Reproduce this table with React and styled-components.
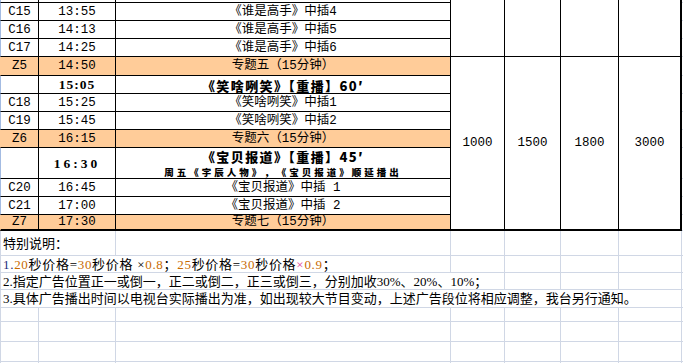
import React from 'react';
import styled, { createGlobalStyle } from 'styled-components';

const GlobalStyle = createGlobalStyle`
  html, body {
    margin: 0;
    padding: 0;
    background: #fff;
  }
  body {
    overflow: hidden;
    font-family: "Liberation Sans", "Noto Sans CJK SC", sans-serif;
  }
`;

const COLUMNS = '39px 77px 335px 54px 56px 58px 63px 2px';
const HOT = '#ffcc99';
const GRID = '#d0d7e5';
const EDGE = '#a3bbe2';

const Sheet = styled.div`
  width: 683px;
  height: 363px;
  overflow: hidden;
  background: #fff;
`;

const Schedule = styled.div`
  display: grid;
  grid-template-columns: ${COLUMNS};
  grid-template-rows: 3px 18px 18px 18px 19px 18px 18px 18px 18px 31px 18px 18px 16px;
`;

const Cell = styled.div`
  box-sizing: border-box;
  grid-row: span ${p => p.$rows || 1};
  display: flex;
  align-items: center;
  justify-content: center;
  padding-top: 1px;
  background: ${p => (p.$hot ? HOT : '#fff')};
  border-left: ${p => (p.$lead ? `1px solid ${p.$hot ? HOT : EDGE}` : 'none')};
  border-right: ${p => (p.$edge ? 2 : 1)}px solid #000;
  border-bottom: ${p => (p.$base ? 2 : 1)}px solid #000;
  font-family: "Liberation Mono", "Noto Sans CJK SC", monospace;
  font-size: 12.5px;
  line-height: 1;
  color: #000;
  white-space: nowrap;
  overflow: hidden;
`;

const Spill = styled.div`
  box-sizing: border-box;
  border-bottom: 1px solid ${GRID};
`;

const Clock = styled.span`
  font-family: "Liberation Serif", "Noto Sans CJK SC", serif;
  font-weight: 700;
  font-size: 13.5px;
  letter-spacing: ${p => p.$spread || 1}px;
`;

const Stack = styled.div`
  display: flex;
  flex-direction: column;
  align-items: center;
  gap: 4px;
`;

const Title = styled.span`
  font-family: "Noto Sans CJK SC", sans-serif;
  font-weight: 900;
  font-size: 13px;
  line-height: 13px;
  letter-spacing: 1.4px;
`;

const Caption = styled.span`
  font-family: "Noto Sans CJK SC", sans-serif;
  font-weight: 900;
  font-size: 9.5px;
  line-height: 10px;
  letter-spacing: 3px;
`;

const Notes = styled.div`
  display: grid;
  grid-template-columns: ${COLUMNS};
  grid-template-rows: 25px 17px 17px 18px 14px 20px 20px 20px;
`;

const NoteCell = styled.div`
  box-sizing: border-box;
  grid-column: span ${p => p.$span || 1};
  display: flex;
  align-items: center;
  padding-left: 2px;
  border-left: ${p => (p.$lead ? `1px solid ${GRID}` : 'none')};
  border-right: ${p => (p.$open ? 'none' : `1px solid ${GRID}`)};
  border-bottom: 1px solid ${GRID};
  font-family: "Liberation Serif", "Noto Sans CJK SC", serif;
  font-size: 13px;
  line-height: 1;
  letter-spacing: ${p => p.$track || 0}px;
  color: #000;
  white-space: nowrap;
  overflow: visible;
`;

const Tint = styled.span`
  color: ${p => p.$c};
`;

const slots = [
  { code: 'C15', time: '13:55', show: '《谁是高手》中插4' },
  { code: 'C16', time: '14:13', show: '《谁是高手》中插5' },
  { code: 'C17', time: '14:25', show: '《谁是高手》中插6' },
  { code: 'Z5', time: '14:50', show: '专题五（15分钟）', hot: true },
  { code: '', time: <Clock>15:05</Clock>, show: <Title>《笑啥咧笑》【重播】60′</Title> },
  { code: 'C18', time: '15:25', show: '《笑啥咧笑》中插1' },
  { code: 'C19', time: '15:45', show: '《笑啥咧笑》中插2' },
  { code: 'Z6', time: '16:15', show: '专题六（15分钟）', hot: true },
  {
    code: '',
    time: <Clock $spread={3}>16:30</Clock>,
    show: (
      <Stack>
        <Title>《宝贝报道》【重播】45′</Title>
        <Caption>周五《宇辰人物》，《宝贝报道》顺延播出</Caption>
      </Stack>
    ),
  },
  { code: 'C20', time: '16:45', show: '《宝贝报道》中插 1' },
  { code: 'C21', time: '17:00', show: '《宝贝报道》中插 2' },
  { code: 'Z7', time: '17:30', show: '专题七（15分钟）', hot: true, last: true },
];

const prices = ['1000', '1500', '1800', '3000'];
const ORANGE = '#c86a00';

export default function App() {
  return (
    <Sheet>
      <GlobalStyle />
      <Schedule>
        <Cell $lead />
        <Cell />
        <Cell />
        {prices.map((p, k) => (
          <Cell key={'top' + p} $rows={4} $edge={k === 3} />
        ))}
        <Spill />
        {slots.map((s, i) => (
          <React.Fragment key={i}>
            <Cell $lead $hot={s.hot} $base={s.last}>{s.code}</Cell>
            <Cell $hot={s.hot} $base={s.last}>{s.time}</Cell>
            <Cell $hot={s.hot} $base={s.last}>{s.show}</Cell>
            {i === 3 &&
              prices.map((p, k) => (
                <Cell key={p} $rows={9} $edge={k === 3} $base>{p}</Cell>
              ))}
            <Spill />
          </React.Fragment>
        ))}
      </Schedule>
      <Notes>
        <NoteCell $lead $span={2}>特别说明：</NoteCell>
        <NoteCell />
        <NoteCell />
        <NoteCell />
        <NoteCell />
        <NoteCell />
        <NoteCell $open />

        <NoteCell $lead $span={3} $track={0.7}>
          <Tint $c="#1a2a7a">1.</Tint>
          <Tint $c={ORANGE}>20</Tint>秒价格=<Tint $c={ORANGE}>30</Tint>秒价格 ×
          <Tint $c={ORANGE}>0.8</Tint>；<Tint $c={ORANGE}>25</Tint>秒价格=
          <Tint $c={ORANGE}>30</Tint>秒价格<Tint $c="#e0409a">×</Tint>
          <Tint $c={ORANGE}>0.9</Tint>；
        </NoteCell>
        <NoteCell />
        <NoteCell />
        <NoteCell />
        <NoteCell />
        <NoteCell $open />

        <NoteCell $lead $span={4}>
          2.指定广告位置正一或倒一，正二或倒二，正三或倒三，分别加收30%、20%、10%；
        </NoteCell>
        <NoteCell />
        <NoteCell />
        <NoteCell />
        <NoteCell $open />

        <NoteCell $lead $span={7}>
          3.具体广告播出时间以电视台实际播出为准，如出现较大节目变动，上述广告段位将相应调整，我台另行通知。
        </NoteCell>
        <NoteCell $open />

        {[0, 1, 2, 3].map(r => (
          <React.Fragment key={r}>
            <NoteCell $lead />
            <NoteCell />
            <NoteCell />
            <NoteCell />
            <NoteCell />
            <NoteCell />
            <NoteCell />
            <NoteCell $open />
          </React.Fragment>
        ))}
      </Notes>
    </Sheet>
  );
}
